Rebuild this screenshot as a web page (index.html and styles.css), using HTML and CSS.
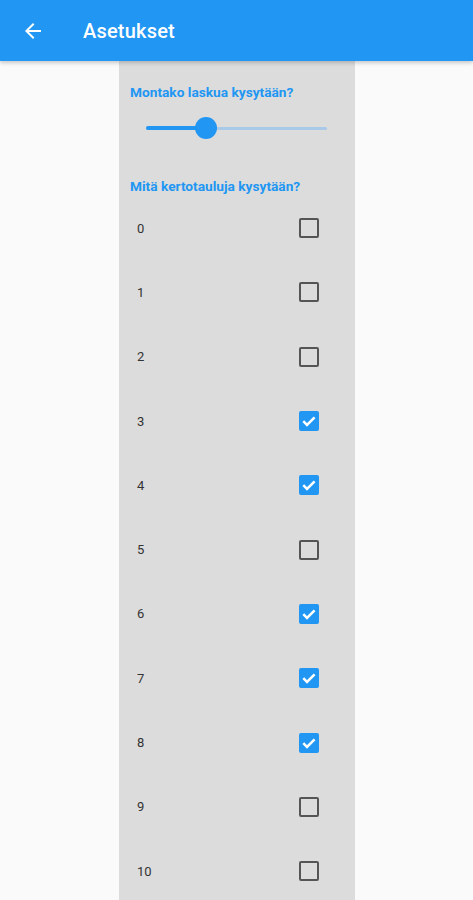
FILE: index.html
```html
<!DOCTYPE html>
<html lang="fi">
<head>
  <meta charset="UTF-8" />
  <meta name="viewport" content="width=device-width, initial-scale=1.0"/>
  <title>Asetukset</title>
  <link rel="stylesheet" href="styles.css">
</head>
<body>

  <header class="app-bar">
    <button class="back-btn" aria-label="Takaisin">
      <svg viewBox="0 0 24 24" width="24" height="24"><path d="M20 11H7.83l5.59-5.59L12 4l-8 8 8 8 1.41-1.41L7.83 13H20v-2z" fill="#fff"/></svg>
    </button>
    <h1>Asetukset</h1>
  </header>

  <main class="panel">
    <div class="label first">Montako laskua kysytään?</div>
    <div class="slider">
      <div class="track">
        <div class="track-active" style="width: 60px;"></div>
        <div class="thumb" style="left: 60px;"></div>
      </div>
    </div>

    <div class="label second">Mitä kertotauluja kysytään?</div>
    <ul class="tables" id="tables"></ul>
  </main>

  <script>
    // which tables are selected
    const selected = [3, 4, 6, 7, 8];
    const list = document.getElementById("tables");
    for (let i = 0; i <= 10; i++) {
      const li = document.createElement("li");
      li.className = "row";
      const checked = selected.includes(i);
      li.innerHTML = `
        <span class="num">${i}</span>
        <span class="box ${checked ? "checked" : ""}">
          ${checked ? '<svg viewBox="0 0 20 20" width="20" height="20"><path d="M4.3 10.2l3.7 3.7 7.6-7.6" fill="none" stroke="#fff" stroke-width="2.5"/></svg>' : ""}
        </span>`;
      list.appendChild(li);
    }
  </script>
</body>
</html>
```

FILE: styles.css
```css
:root {
  --primary: #2196f3;
  --bg: #fafafa;
  --panel: #dcdcdc;
  --text: #333;
}

* {
  box-sizing: border-box;
  margin: 0;
  padding: 0;
}

body {
  font-family: Roboto, "Noto Sans", sans-serif;
  background: var(--bg);
  color: var(--text);
  min-height: 100vh;
  overflow: hidden;
}

.app-bar {
  height: 61px;
  background: var(--primary);
  display: flex;
  align-items: center;
  padding-left: 21px;
  gap: 38px;
  box-shadow: 0 2px 4px rgba(0,0,0,0.2);
  position: relative;
  z-index: 1;
}

.back-btn {
  background: none;
  border: none;
  width: 24px;
  height: 24px;
  display: flex;
}

.app-bar h1 {
  color: #fff;
  font-size: 20px;
  font-weight: 500;
  letter-spacing: 0.2px;
}

.panel {
  margin-left: 119px;
  width: 236px;
  background: var(--panel);
  min-height: calc(100vh - 61px);
  padding: 21px 36px 0 11px;
}

.label {
  color: var(--primary);
  font-size: 13.7px;
  font-weight: 700;
  line-height: 20px;
  white-space: nowrap;
}

.label.second {
  margin-top: 32px;
}

.slider {
  margin-top: 10px;
  height: 32px;
  display: flex;
  align-items: center;
  padding-left: 16px;
  margin-right: -8px;
}

.track {
  position: relative;
  width: 181px;
  height: 3px;
  border-radius: 2px;
  background: #a9c9e8;
}

.track-active {
  position: absolute;
  left: 0;
  top: -0.5px;
  height: 4px;
  border-radius: 2px;
  background: var(--primary);
}

.thumb {
  position: absolute;
  top: 50%;
  width: 22px;
  height: 22px;
  margin: -11px 0 0 -11px;
  border-radius: 50%;
  background: var(--primary);
}

.tables {
  list-style: none;
}

.row {
  height: 64.3px;
  display: flex;
  align-items: center;
  justify-content: space-between;
  padding-left: 7px;
}

.num {
  font-size: 13px;
}

.box {
  width: 20px;
  height: 20px;
  border: 2px solid #555;
  border-radius: 2px;
  display: flex;
}

.box.checked {
  border: none;
  background: var(--primary);
}
```
